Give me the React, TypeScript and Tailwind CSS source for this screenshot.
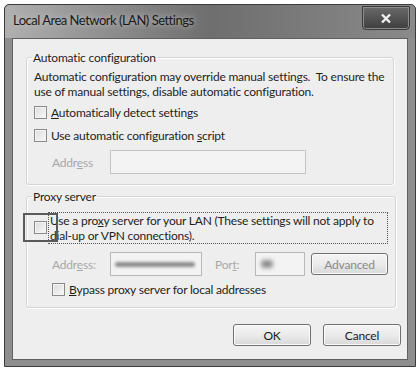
import React from "react";

function Check() {
  return (
    <span className="inline-block h-[13px] w-[13px] shrink-0 border border-[#8a8a8a] bg-gradient-to-br from-[#dcdcdc] to-[#f8f8f8] shadow-[inset_0_0_0_1px_#f4f4f4]" />
  );
}

function Button({ label, disabled }: { label: string; disabled?: boolean }) {
  return (
    <div
      className={
        "flex h-[22px] items-center justify-center rounded-[3px] border border-[#707070] bg-gradient-to-b from-[#f4f4f4] via-[#ebebeb] to-[#d8d8d8] shadow-[inset_0_0_0_1px_#fbfbfb] " +
        (disabled ? "text-[#8a8a8a]" : "text-[#1a1a1a]")
      }
    >
      {label}
    </div>
  );
}

function Group({ title, children }: { title: string; children: React.ReactNode }) {
  return (
    <fieldset className="rounded-[3px] border border-[#d5d5d5] px-[7px] pb-[10px] shadow-[1px_1px_0_#ffffff,inset_1px_1px_0_#ffffff]">
      <legend className="ml-[-2px] px-[1px] text-[#1e1e1e]">{title}</legend>
      {children}
    </fieldset>
  );
}

export default function App() {
  return (
    <div className="h-[370px] w-[420px] bg-white p-[4px] text-[12px] leading-[15px] tracking-[-0.2px] [font-family:Lato,sans-serif]">
      <div className="flex h-[363px] w-[412px] flex-col rounded-t-[5px] border border-[#3c3c3c] bg-[#8e8e8e] px-[7px] pb-[6px]">
        {/* title bar */}
        <div className="relative -mx-[7px] flex h-[33px] items-center rounded-t-[5px] bg-gradient-to-r from-[#b0b0b0] via-[#6e6e6e] to-[#8a8a8a] px-[8px] pb-[3px]">
          <span className="text-[13px] tracking-[-0.5px] text-[#1a1a1a] [text-shadow:0_0_6px_#d0d0d0]">Local Area Network (LAN) Settings</span>
          <div className="absolute right-[5px] top-[1px] flex h-[24px] w-[48px] items-center justify-center rounded-b-[4px] border border-[#3a3a3a] bg-gradient-to-b from-[#6a6a6a] to-[#3e3e3e] shadow-[inset_0_0_0_1px_#8c8c8c]">
            <svg width="12" height="11" viewBox="0 0 12 11">
              <path d="M2 1.5 L10 9.5 M10 1.5 L2 9.5" stroke="#f0f0f0" strokeWidth="2.4" />
            </svg>
          </div>
        </div>

        {/* client area */}
        <div className="flex flex-1 flex-col border border-[#606060] bg-[#eeeeee] px-[13px] pt-[11px]">
          <Group title="Automatic configuration">
            <p className="mt-[4px] text-[#1e1e1e]">
              Automatic configuration may override manual settings.&nbsp; To ensure the use of manual settings, disable automatic configuration.
            </p>
            <div className="mt-[6px] flex items-center gap-[4px] text-[#1e1e1e]">
              <Check />
              <span><u>A</u>utomatically detect settings</span>
            </div>
            <div className="mt-[8px] flex items-center gap-[4px] text-[#1e1e1e]">
              <Check />
              <span>Use automatic configuration <u>s</u>cript</span>
            </div>
            <div className="mt-[7px] flex items-center pl-[18px]">
              <span className="w-[58px] text-[#a8a8a8]">Addr<u>e</u>ss</span>
              <div className="h-[24px] w-[196px] border border-[#c4c4c4] bg-[#f3f3f3]" />
            </div>
          </Group>

          <div className="mt-[4px]">
            <Group title="Proxy server">
              <div className="relative mt-[8px] pl-[14px]">
                <div className="w-fit border border-dotted border-[#555] py-[0px] pl-[1px] pr-[2px] text-[#1e1e1e]">
                  Use a pro<u>x</u>y server for your LAN (These settings will not apply to dial-up or VPN connections).
                </div>
                <div className="absolute -left-[11px] top-[1px] flex h-[29px] w-[35px] items-center justify-center border-2 border-[#5a5a5a]">
                  <Check />
                </div>
              </div>
              <div className="mt-[8px] flex items-center pl-[18px]">
                <span className="w-[58px] text-[#a8a8a8]">Addr<u>e</u>ss:</span>
                <div className="flex h-[24px] w-[92px] items-center border border-[#b8b8b8] bg-[#f3f3f3] px-[4px]">
                  <div className="h-[5px] w-[80px] rounded-full bg-[#8c8c8c] blur-[1.5px]" />
                </div>
                <span className="ml-[13px] w-[40px] text-[#a8a8a8]">Por<u>t</u>:</span>
                <div className="flex h-[24px] w-[50px] items-center border border-[#b8b8b8] bg-[#f3f3f3] px-[5px]">
                  <div className="h-[8px] w-[12px] rounded-full bg-[#8c8c8c] blur-[2px]" />
                </div>
                <div className="ml-[6px] w-[77px]">
                  <Button label="Advanced" disabled />
                </div>
              </div>
              <div className="mt-[6px] flex items-center gap-[4px] pl-[18px] text-[#1e1e1e]">
                <Check />
                <span><u>B</u>ypass proxy server for local addresses</span>
              </div>
            </Group>
          </div>

          <div className="-mr-[7px] mt-[16px] flex justify-end gap-[12px]">
            <div className="w-[78px]">
              <Button label="OK" />
            </div>
            <div className="w-[78px]">
              <Button label="Cancel" />
            </div>
          </div>
        </div>
      </div>
    </div>
  );
}
